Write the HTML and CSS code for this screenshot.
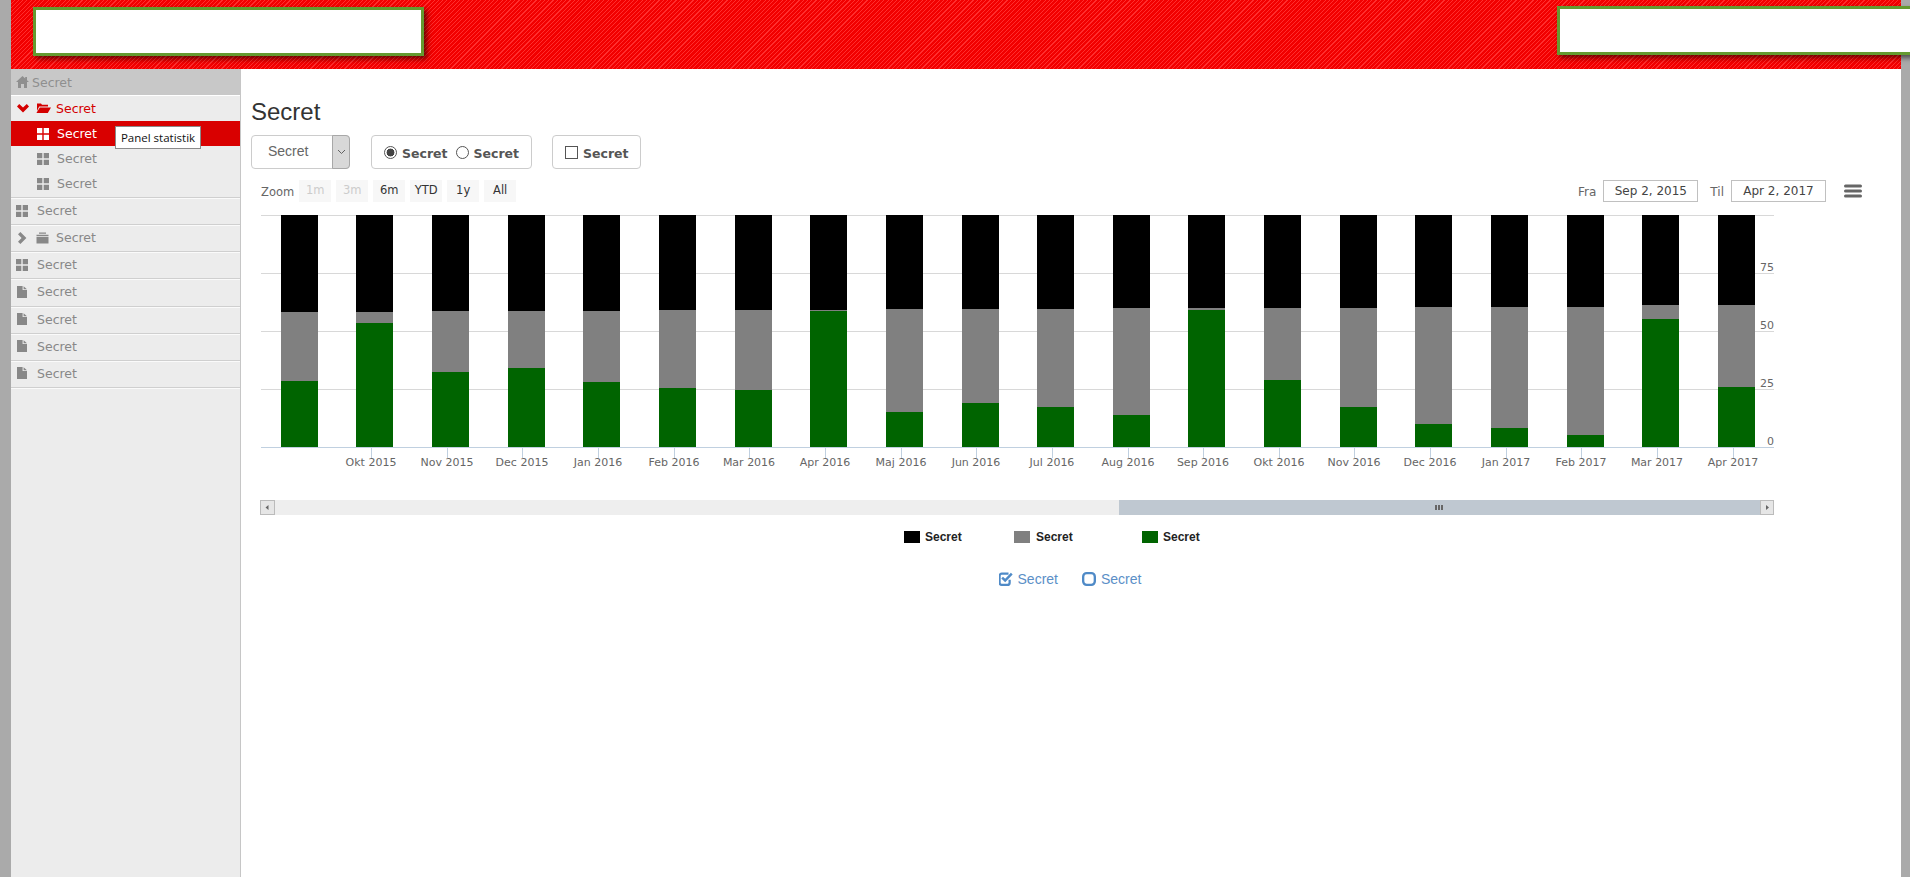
FILE: index.html
```html
<!DOCTYPE html>
<html lang="da">
<head>
<meta charset="utf-8">
<title>Secret</title>
<link rel="stylesheet" href="styles.css">
</head>
<body>
<svg class="defs" width="0" height="0" aria-hidden="true">
  <symbol id="i-th" viewBox="0 0 12 12"><path d="M0 0h5.3v5.3H0zM6.7 0H12v5.3H6.7zM0 6.7h5.3V12H0zM6.7 6.7H12V12H6.7z"/></symbol>
  <symbol id="i-file" viewBox="0 0 10 12"><path d="M0 0h5.6v4h4.4v8H0zM6.6 0.2L10 3.2H6.6z"/></symbol>
  <symbol id="i-home" viewBox="0 0 13 12"><path d="M6.5 0L9.2 2.5V1h1.8v3.2L13 6h-2v6H8V8H5v4H2V6H0z"/></symbol>
  <symbol id="i-down" viewBox="0 0 12 9"><path d="M2.2 0L6 3.6 9.8 0 12 2.4 6 8.4 0 2.4z"/></symbol>
  <symbol id="i-right" viewBox="0 0 9 12"><path d="M2.4 0L8.4 6 2.4 12 0 9.8 3.6 6 0 2.2z"/></symbol>
  <symbol id="i-open" viewBox="0 0 15 12"><path d="M1 1.5h4l1 1.3h6V4.6H3.2L1 9zM3.8 5.6H15L11.8 11H0.4z"/></symbol>
  <symbol id="i-folder" viewBox="0 0 13 12"><path d="M3 0.5h7v1.3H3zM0.5 2.8h12v1.4H0.5zM0.5 5h12v6.5H0.5z"/></symbol>
</svg>

<header class="topbar">
  <div class="logo-box"></div>
  <div class="logo-box logo-box-right"></div>
</header>

<div class="shell">
  <nav class="sidebar">
    <a class="nav-home"><svg class="ico ico-home"><use href="#i-home"/></svg>Secret</a>
    <div class="nav-group">
      <a class="nav-row nav-open">
        <svg class="ico ico-chev"><use href="#i-down"/></svg>
        <svg class="ico ico-open"><use href="#i-open"/></svg>Secret
      </a>
      <a class="nav-sub nav-active"><svg class="ico ico-th"><use href="#i-th"/></svg>Secret</a>
      <a class="nav-sub"><svg class="ico ico-th"><use href="#i-th"/></svg>Secret</a>
      <a class="nav-sub"><svg class="ico ico-th"><use href="#i-th"/></svg>Secret</a>
      <div class="tooltip">Panel statistik</div>
    </div>
    <a class="nav-row"><svg class="ico ico-th ico-lead"><use href="#i-th"/></svg>Secret</a>
    <a class="nav-row nav-tree">
      <svg class="ico ico-chevr"><use href="#i-right"/></svg>
      <svg class="ico ico-folder"><use href="#i-folder"/></svg>Secret
    </a>
    <a class="nav-row"><svg class="ico ico-th ico-lead"><use href="#i-th"/></svg>Secret</a>
    <a class="nav-row"><svg class="ico ico-file ico-lead"><use href="#i-file"/></svg>Secret</a>
    <a class="nav-row"><svg class="ico ico-file ico-lead"><use href="#i-file"/></svg>Secret</a>
    <a class="nav-row"><svg class="ico ico-file ico-lead"><use href="#i-file"/></svg>Secret</a>
    <a class="nav-row"><svg class="ico ico-file ico-lead"><use href="#i-file"/></svg>Secret</a>
  </nav>

  <main class="content">
    <h1 class="title">Secret</h1>

    <div class="filters">
      <div class="select">
        <span class="select-value">Secret</span>
        <span class="select-arrow"><svg width="9" height="6" viewBox="0 0 9 6"><path d="M1 1l3.5 3.5L8 1" fill="none" stroke="#555" stroke-width="0.9"/></svg></span>
      </div>
      <div class="group">
        <span class="radio radio-on"></span><span class="group-label">Secret</span>
        <span class="radio"></span><span class="group-label">Secret</span>
      </div>
      <div class="group group-check">
        <span class="check"></span><span class="group-label">Secret</span>
      </div>
    </div>

    <div class="range">
      <div class="range-left">
        <span class="range-label">Zoom</span>
        <span class="range-btn range-off">1m</span>
        <span class="range-btn range-off">3m</span>
        <span class="range-btn">6m</span>
        <span class="range-btn">YTD</span>
        <span class="range-btn">1y</span>
        <span class="range-btn">All</span>
      </div>
      <div class="range-right">
        <span class="range-label">Fra</span>
        <span class="date">Sep 2, 2015</span>
        <span class="range-label range-til">Til</span>
        <span class="date">Apr 2, 2017</span>
        <svg class="menu" width="18" height="14" viewBox="0 0 18 14"><path d="M1.5 2h15M1.5 7h15M1.5 12h15" stroke="#666" stroke-width="3" stroke-linecap="round"/></svg>
      </div>
    </div>

    <svg class="chart" width="1530" height="330" viewBox="256 210 1530 330">
      <g class="grid">
        <path d="M261 215.5H1774M261 273.5H1774M261 331.5H1774M261 389.5H1774"/>
      </g>
      <g id="bars"></g>
      <path class="axis" d="M261 447.5H1774"/>
      <g id="ticks"></g>
      <g class="ylab">
        <text x="1774" y="271">75</text>
        <text x="1774" y="329">50</text>
        <text x="1774" y="387">25</text>
        <text x="1774" y="445">0</text>
      </g>
      <g class="scroll">
        <rect class="sb-track" x="260" y="500" width="1514" height="15"/>
        <rect class="sb-thumb" x="1119" y="500" width="641" height="15"/>
        <rect class="sb-btn" x="260.5" y="500.5" width="14" height="14"/>
        <rect class="sb-btn" x="1760.5" y="500.5" width="13" height="14"/>
        <path class="sb-mark" d="M268.5 505v5l-3-2.5zM1766 505v5l3-2.5zM1435 505h2v5h-2zM1438 505h2v5h-2zM1441 505h2v5h-2z"/>
      </g>
    </svg>

    <div class="actions">
      <a class="action"><svg class="action-ico" width="14" height="14" viewBox="1 1 12.5 12.5"><path d="M10.5 8v2.5a2 2 0 0 1-2 2h-5a2 2 0 0 1-2-2v-6a2 2 0 0 1 2-2h6" fill="none" stroke="#4f8ac7" stroke-width="2"/><path d="M3.8 6L6.5 8.6 12.4 2.4" fill="none" stroke="#4f8ac7" stroke-width="2.2"/></svg>Secret</a>
      <a class="action"><svg class="action-ico" width="14" height="14" viewBox="1 1 12 12"><rect x="2" y="2" width="10" height="10" rx="3" fill="none" stroke="#4f8ac7" stroke-width="2"/></svg>Secret</a>
    </div>
  </main>
</div>

<script src="chart.js"></script>
</body>
</html>
```

FILE: chart.js
```js
var NS = "http://www.w3.org/2000/svg";
var TOP = 215, BASE = 447, BAR = 37;
/* left edge, bottom of the black part, top of the green part */
var bars = [
  [281,312,381],[356,312,323],[432,311,372],[508,311,368],[583,311,382],
  [659,310,388],[735,310,390],[810,310,311],[886,309,412],[962,309,403],
  [1037,309,407],[1113,308,415],[1188,308,310],[1264,308,380],[1340,308,407],
  [1415,307,424],[1491,307,428],[1567,307,435],[1642,305,319],[1718,305,387]
];
var ticks = [
  ["Okt 2015",371],["Nov 2015",447],["Dec 2015",522],["Jan 2016",598],["Feb 2016",674],
  ["Mar 2016",749],["Apr 2016",825],["Maj 2016",901],["Jun 2016",976],["Jul 2016",1052],
  ["Aug 2016",1128],["Sep 2016",1203],["Okt 2016",1279],["Nov 2016",1354],["Dec 2016",1430],
  ["Jan 2017",1506],["Feb 2017",1581],["Mar 2017",1657],["Apr 2017",1733]
];
var legend = [[904,925,"lg-k"],[1014,1036,"lg-g"],[1142,1163,"lg-d"]];

function el(parent, name, attrs, text) {
  var n = document.createElementNS(NS, name);
  for (var k in attrs) n.setAttribute(k, attrs[k]);
  if (text) n.textContent = text;
  parent.appendChild(n);
  return n;
}
var gb = document.getElementById("bars");
bars.forEach(function (b) {
  el(gb, "rect", {x: b[0], y: TOP, width: BAR, height: b[1] - TOP, "class": "s-k"});
  el(gb, "rect", {x: b[0], y: b[1], width: BAR, height: b[2] - b[1], "class": "s-g"});
  el(gb, "rect", {x: b[0], y: b[2], width: BAR, height: BASE - b[2], "class": "s-d"});
});
var gt = document.getElementById("ticks");
ticks.forEach(function (t) {
  el(gt, "path", {d: "M" + (t[1] + 0.5) + " 448V458", "class": "tick"});
  el(gt, "text", {x: t[1], y: 466, "class": "xlab"}, t[0]);
});
var svg = document.querySelector(".chart");
legend.forEach(function (l) {
  el(svg, "rect", {x: l[0], y: 531, width: 16, height: 12, "class": l[2]});
  el(svg, "text", {x: l[1], y: 541, "class": "lg-text"}, "Secret");
});
```

FILE: styles.css
```css
* { box-sizing: border-box; }
html, body { height: 100%; margin: 0; overflow: hidden; }
body {
  display: flex;
  flex-direction: column;
  padding: 0 9px 0 11px;
  background: #aaaaaa;
  font-family: "Liberation Sans", Arial, sans-serif;
  color: #333;
}
.defs { position: absolute; }

/* header */
.topbar {
  flex: 0 0 69px;
  display: flex;
  justify-content: space-between;
  align-items: flex-start;
  padding-left: 22px;
  background: repeating-linear-gradient(135deg, #f20000 0, #f20000 2.2px, #ff2e2e 2.2px, #ff2e2e 3px);
}
.logo-box {
  width: 391px;
  height: 49px;
  margin-top: 7px;
  background: #fff;
  border: 3px solid #649a30;
  box-shadow: 3px 3px 5px rgba(0, 0, 0, .55);
}
.logo-box-right { margin-top: 6px; margin-right: -30px; width: 374px; }

.shell { flex: 1; display: flex; min-height: 0; }

/* sidebar */
.sidebar {
  flex: 0 0 230px;
  background: #ececec;
  border-right: 1px solid #c6c6c6;
  font: 12.5px "DejaVu Sans", Verdana, sans-serif;
  color: #888;
}
.sidebar a { display: flex; align-items: center; }
.ico { flex: none; fill: currentColor; }
.nav-home {
  height: 27px;
  padding-left: 5px;
  background: #c8c8c8;
  color: #8f8f8f;
  border-bottom: 1px solid #fff;
}
.ico-home { width: 13px; height: 12px; margin-right: 3px; }
.nav-group { position: relative; padding-bottom: 1px; border-bottom: 1px solid #cfcfcf; box-shadow: 0 1px 0 #fafafa; }
.nav-row {
  height: 27.15px;
  padding-left: 5px;
  border-bottom: 1px solid #cfcfcf;
  box-shadow: 0 1px 0 #fafafa;
  padding-bottom: 1px;
}
.nav-open { height: 25px; color: #d40000; border-bottom: 0; box-shadow: none; padding-left: 6px; }
.nav-tree { padding-left: 7px; }
.ico-chev { width: 12px; height: 9px; margin-right: 7px; }
.ico-open { width: 15px; height: 12px; margin-right: 5px; }
.ico-chevr { width: 9px; height: 12px; margin-right: 9px; }
.ico-folder { width: 13px; height: 12px; margin-right: 7px; }
.ico-th { width: 12px; height: 12px; }
.ico-file { width: 10px; height: 12px; margin-left: 1px; margin-right: 10px; }
.ico-lead.ico-th { margin-right: 9px; }
.nav-sub { height: 25px; padding-left: 26px; }
.nav-sub .ico-th { margin-right: 8px; }
.nav-active { background: #d90000; color: #fff; }
.tooltip {
  position: absolute;
  left: 104px;
  top: 30px;
  width: 86px;
  height: 23px;
  background: #fff;
  border: 1px solid #8a8a8a;
  color: #111;
  font: 11.5px "Open Sans", "DejaVu Sans", sans-serif;
  line-height: 21px;
  text-align: center;
  white-space: nowrap;
}

/* content */
.content { flex: 1; min-width: 0; background: #fff; padding: 29px 0 0 10px; }
.title { margin: 0; font-size: 24px; font-weight: 400; line-height: 28px; color: #333; }
.filters { display: flex; gap: 21px; margin-top: 9px; height: 34px; }
.select {
  display: flex;
  justify-content: space-between;
  width: 99px;
  background: #fff;
  border: 1px solid #ccc;
  border-radius: 4px;
}
.select-value { padding-left: 16px; font-size: 14px; line-height: 31px; color: #666; }
.select-arrow {
  display: flex;
  align-items: center;
  justify-content: center;
  width: 18px;
  margin: -1px -1px -1px 0;
  background: #d8d8d8;
  border: 1px solid #a8a8a8;
  border-radius: 0 4px 4px 0;
}
.group {
  display: flex;
  align-items: center;
  width: 161px;
  padding-left: 12px;
  border: 1px solid #ccc;
  border-radius: 4px;
}
.group-check { width: 89px; margin-left: -1px; }
.group-label {
  margin-left: 5px;
  margin-right: 8px;
  padding-top: 2px;
  font: 700 12.5px "DejaVu Sans", Verdana, sans-serif;
  color: #555;
}
.radio {
  flex: none;
  position: relative;
  width: 13px;
  height: 13px;
  border: 1px solid #555;
  border-radius: 50%;
}
.radio-on { background: radial-gradient(circle at center, #444 0, #444 3.7px, #fff 4.2px); }
.check { flex: none; width: 13px; height: 13px; border: 1px solid #555; }

.range {
  display: flex;
  justify-content: space-between;
  align-items: center;
  height: 22px;
  margin-top: 11px;
  padding-left: 10px;
  font: 11.5px "DejaVu Sans", Verdana, sans-serif;
  color: #444;
}
.range-left, .range-right { display: flex; align-items: center; }
.range-left { gap: 5px; }
.range-right { padding-right: 39px; font-size: 12px; }
.range-label { color: #666; padding-top: 2px; }
.range-btn {
  width: 32px;
  height: 22px;
  line-height: 20px;
  text-align: center;
  background: #f7f7f7;
  color: #333;
}
.range-off { color: #cccccc; }
.date {
  width: 95px;
  height: 22px;
  margin-left: 7px;
  line-height: 20px;
  text-align: center;
  border: 1px solid #c0c0c0;
  color: #444;
}
.range-til { margin-left: 12px; }
.menu { margin-left: 18px; }

/* chart */
.chart { display: block; margin: 8px 0 0 5px; overflow: visible; font-family: "DejaVu Sans", Verdana, sans-serif; }
.grid path { fill: none; stroke: #d8d8d8; stroke-width: 1; }
.axis, .tick { fill: none; stroke: #c0d0e0; stroke-width: 1; }
.s-k, .lg-k { fill: #000; }
.s-g, .lg-g { fill: #808080; }
.s-d, .lg-d { fill: #006400; }
.xlab { font-size: 11px; fill: #666; text-anchor: middle; }
.ylab text { font-size: 11px; fill: #666; text-anchor: end; }
.lg-text { font: 700 12px "Liberation Sans", Arial, sans-serif; fill: #222; }
.sb-track { fill: #eeeeee; }
.sb-thumb { fill: #bfc8d1; }
.sb-btn { fill: #e6e6e6; stroke: #bbbbbb; }
.sb-mark { fill: #666; }

/* links under the chart */
.actions { display: flex; justify-content: center; gap: 24px; margin-top: 30px; padding-right: 12px; font-size: 14px; line-height: 18px; }
.action { display: flex; align-items: center; color: #5b8fc7; }
.action-ico { margin-right: 5px; }
```
